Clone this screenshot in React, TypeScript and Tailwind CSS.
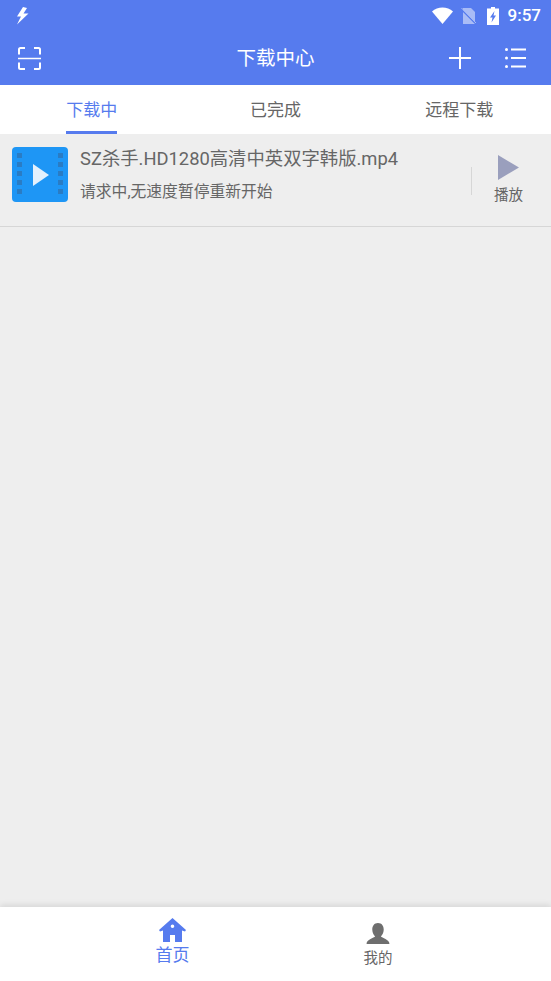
import { useState } from "react";

const tabs = ["下载中", "已完成", "远程下载"];

const StatusBar = () => (
    <div className="flex h-[31px] items-center pl-[15px] pr-[10px] text-white">
        <svg width="14" height="18" viewBox="0 0 14 18" fill="white">
            <path d="M8 0 L2 9.5 L6 9.5 L2 17.5 L13.5 6.5 L8.5 6.5 L12 1 Z" />
        </svg>
        <div className="ml-auto flex items-center">
            <svg width="21" height="17" viewBox="0 0 21 17" fill="white">
                <path d="M0 4.5 C5.5 -1 15.5 -1 21 4.5 L10.5 17 Z" />
            </svg>
            <svg className="ml-[7px]" width="16" height="18" viewBox="0 0 16 18">
                <path d="M3 1 H11 L15 5 V17 H3 Z" fill="#a9bcf6" />
                <path d="M1 2 L16 17" stroke="#567bee" strokeWidth="1.5" />
                <path d="M1.5 1 L16 16" stroke="#a9bcf6" strokeWidth="1" />
            </svg>
            <svg className="ml-[11px]" width="12" height="18" viewBox="0 0 12 18">
                <path d="M4 0 H8 V1.5 H12 V18 H0 V1.5 H4 Z" fill="white" />
                <path d="M7.5 4 L3 10.5 H5.5 L4.5 15.5 L9 8.5 H6.5 Z" fill="#567bee" />
            </svg>
            <span className="ml-[9px] text-[17px] font-medium leading-none">9:57</span>
        </div>
    </div>
);

const Header = () => (
    <div className="flex h-[54px] items-center pl-[17px] pr-[25px] text-white">
        <div className="flex-1">
            <svg width="25" height="25" viewBox="0 0 25 25" fill="none" stroke="white" strokeWidth="2">
                <path d="M8 2 H3.5 Q2 2 2 3.5 V8.5" />
                <path d="M17 2 H21.5 Q23 2 23 3.5 V8.5" />
                <path d="M1 12.5 H24" strokeWidth="1.5" />
                <path d="M2 16.5 V21.5 Q2 23 3.5 23 H8" />
                <path d="M23 16.5 V21.5 Q23 23 21.5 23 H17" />
            </svg>
        </div>
        <div className="pl-[8px] pt-[2px] text-[19.5px] leading-none">下载中心</div>
        <div className="flex flex-1 items-center justify-end">
            <svg className="mr-[34px]" width="22" height="22" viewBox="0 0 22 22" stroke="white" strokeWidth="2">
                <path d="M11 0 V22 M0 11 H22" />
            </svg>
            <svg width="21" height="20" viewBox="0 0 21 20" fill="white">
                <circle cx="1.5" cy="1.5" r="1.5" />
                <circle cx="1.5" cy="10" r="1.5" />
                <circle cx="1.5" cy="18.5" r="1.5" />
                <rect x="6" y="0.5" width="15" height="2" />
                <rect x="6" y="9" width="15" height="2" />
                <rect x="6" y="17.5" width="15" height="2" />
            </svg>
        </div>
    </div>
);

const VideoIcon = () => (
    <div className="relative flex h-[55px] w-[56px] shrink-0 items-center justify-center rounded-[4px] bg-[#1e96f5]">
        <div className="absolute left-[5px] top-[6px] flex h-[41px] flex-col justify-between">
            {[0, 1, 2, 3, 4].map((i) => (
                <span key={i} className="block h-[5px] w-[5px] bg-[#2a7cc4]" />
            ))}
        </div>
        <div className="absolute right-[5px] top-[6px] flex h-[41px] flex-col justify-between">
            {[0, 1, 2, 3, 4].map((i) => (
                <span key={i} className="block h-[5px] w-[5px] bg-[#2a7cc4]" />
            ))}
        </div>
        <svg className="ml-[2px]" width="16" height="22" viewBox="0 0 16 22" fill="#e3f1fd">
            <path d="M0 0 L16 11 L0 22 Z" />
        </svg>
    </div>
);

const App = () => {
    const [active] = useState(0);

    return (
        <div className="flex h-[981px] w-[551px] flex-col bg-[#eeeeee] font-['Roboto','Noto_Sans_CJK_SC',sans-serif]">
            <div className="bg-[#567bee]">
                <StatusBar />
                <Header />
            </div>

            <div className="flex h-[49px] bg-white">
                {tabs.map((tab, index) => (
                    <div key={tab} className="flex flex-1 justify-center">
                        <div
                            className={`flex h-full items-center border-b-[3px] pt-[5px] text-[17px] ${
                                index === active ? "border-[#567bee] text-[#567bee]" : "border-transparent text-[#666666]"
                            }`}
                        >
                            {tab}
                        </div>
                    </div>
                ))}
            </div>

            <div className="flex h-[93px] items-start border-b border-[#d6d6d6] pt-[13px]">
                <div className="ml-[12px]">
                    <VideoIcon />
                </div>
                <div className="ml-[12px] flex-1 text-[#666666]">
                    <div className="text-[18.35px] leading-[24px]">SZ杀手.HD1280高清中英双字韩版.mp4</div>
                    <div className="mt-[11px] text-[15.8px] leading-[20px]">请求中,无速度暂停重新开始</div>
                </div>
                <div className="mt-[20px] h-[28px] w-px bg-[#d6d6d6]" />
                <div className="mr-[5px] mt-[8px] flex w-[74px] flex-col items-center">
                    <svg className="mr-[1px]" width="21" height="25" viewBox="0 0 21 25" fill="#9a9fbd">
                        <path d="M0 0 L21 12.5 L0 25 Z" />
                    </svg>
                    <span className="mt-[7px] mr-[1px] text-[14.5px] leading-[18px] text-[#666666]">播放</span>
                </div>
            </div>

            <div className="flex-1" />

            <div className="flex h-[74px] bg-white shadow-[0_-2px_6px_rgba(0,0,0,0.1)]">
                <div className="flex w-[345px] flex-col items-center pt-[11px] text-[#567bee]">
                    <svg width="27" height="24" viewBox="0 0 27 24" fill="#567bee">
                        <path fillRule="evenodd" d="M13.5 0 L27 12 L26 13.5 L23 12.5 V24 H16 V17 H11 V24 H4 V12.5 L1 13.5 L0 12 Z M13.5 6.5 A1.8 1.8 0 1 0 13.5 10.1 A1.8 1.8 0 1 0 13.5 6.5 Z" />
                    </svg>
                    <span className="mt-[2px] text-[17px] leading-[22px]">首页</span>
                </div>
                <div className="flex w-[66px] flex-col items-center pt-[16px] text-[#666666]">
                    <svg width="24" height="21" viewBox="0 0 24 22" fill="#6e6e6e">
                        <path d="M12 0 C16 0 18 3 18 7 C18 10.5 16 13 15 14 C16 16 24 17 24 22 H0 C0 17 8 16 9 14 C8 13 6 10.5 6 7 C6 3 8 0 12 0 Z" />
                    </svg>
                    <span className="mt-[6px] text-[14.5px] leading-[18px]">我的</span>
                </div>
            </div>
        </div>
    );
};

export default App;
